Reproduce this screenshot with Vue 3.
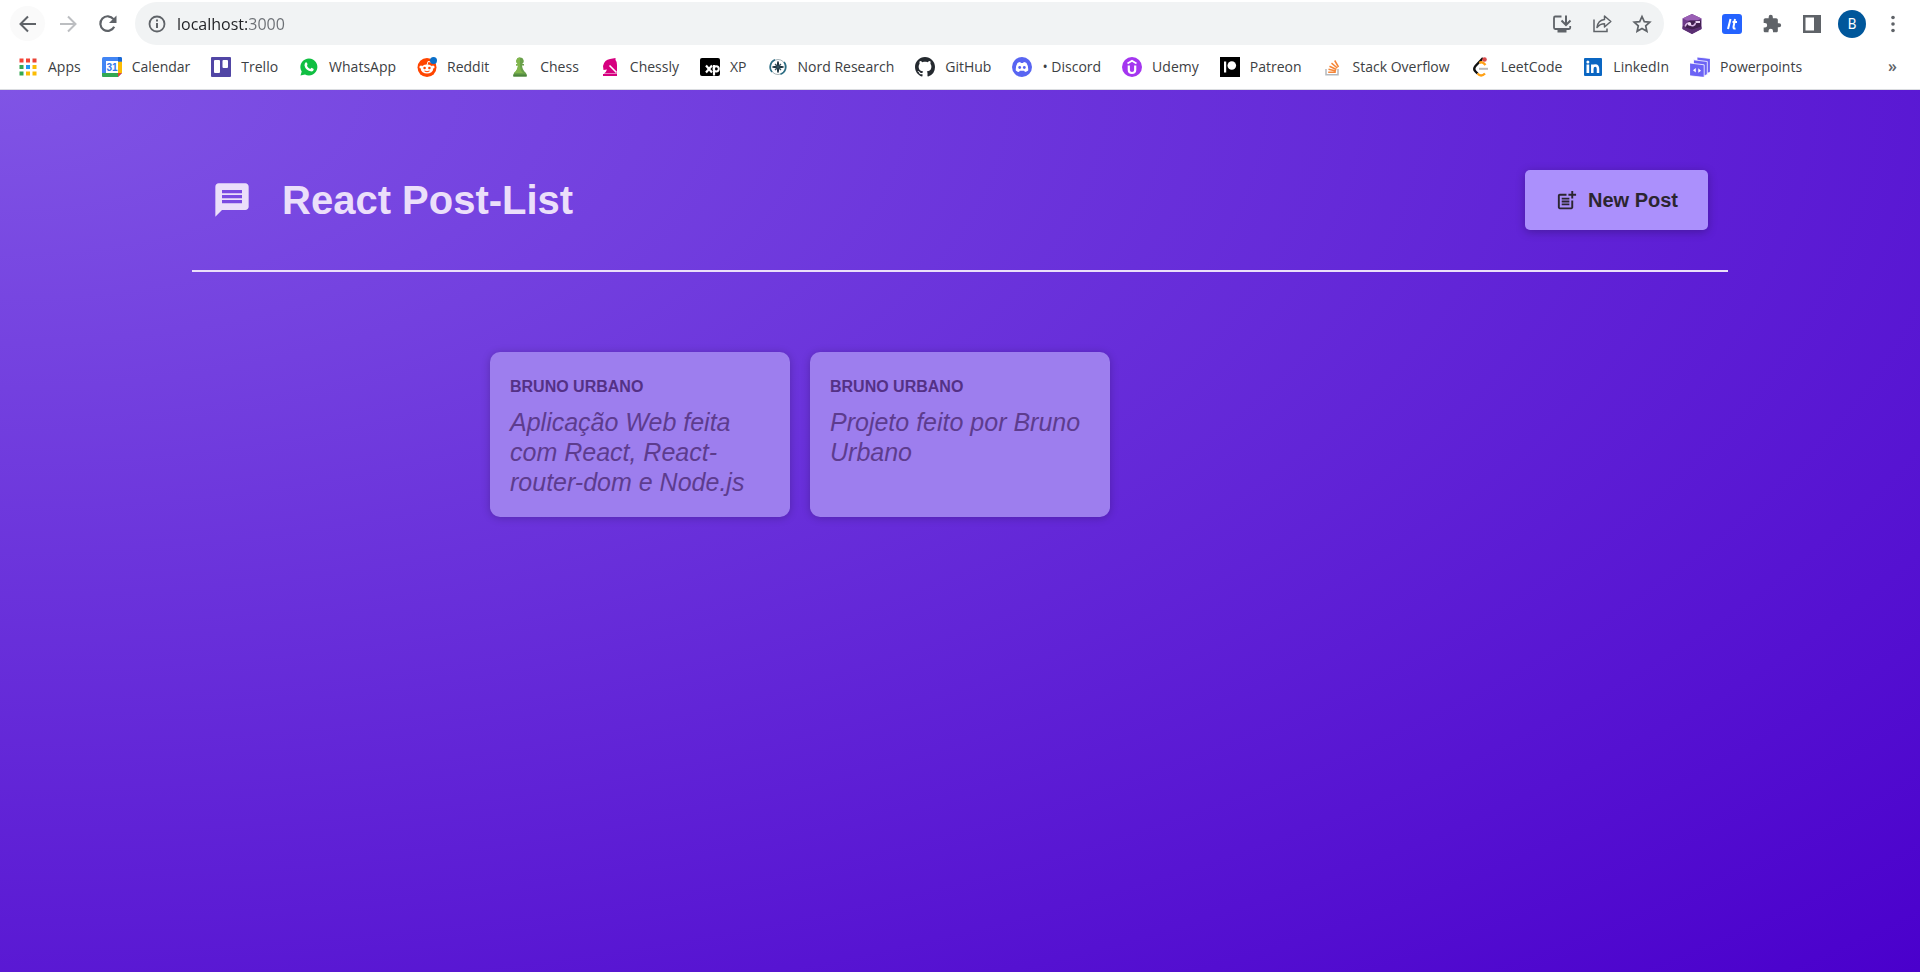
<script setup>
const bookmarks = [
  { id: 'apps', label: 'Apps' },
  { id: 'calendar', label: 'Calendar' },
  { id: 'trello', label: 'Trello' },
  { id: 'whatsapp', label: 'WhatsApp' },
  { id: 'reddit', label: 'Reddit' },
  { id: 'chess', label: 'Chess' },
  { id: 'chessly', label: 'Chessly' },
  { id: 'xp', label: 'XP' },
  { id: 'nord', label: 'Nord Research' },
  { id: 'github', label: 'GitHub' },
  { id: 'discord', label: '• Discord' },
  { id: 'udemy', label: 'Udemy' },
  { id: 'patreon', label: 'Patreon' },
  { id: 'stack', label: 'Stack Overflow' },
  { id: 'leetcode', label: 'LeetCode' },
  { id: 'linkedin', label: 'LinkedIn' },
  { id: 'powerpoints', label: 'Powerpoints' },
]
const appColors = ['#f44336', '#f44336', '#ea4335', '#34a853', '#2196f3', '#fbbc04', '#34a853', '#fbbc04', '#fbbc04']
const posts = [
  { author: 'Bruno Urbano', body: 'Aplicação Web feita com React, React-router-dom e Node.js' },
  { author: 'Bruno Urbano', body: 'Projeto feito por Bruno Urbano' },
]
</script>

<template>
  <div class="window">
    <div class="browser">
      <div class="toolbar">
        <button class="tool back" aria-label="Back">
          <svg viewBox="0 0 20 20"><path d="M18 10H3M10 2.500L2.500 10L10 17.500" fill="none" stroke="#5f6368" stroke-width="2" /></svg>
        </button>
        <button class="tool" aria-label="Forward">
          <svg viewBox="0 0 20 20"><path d="M2 10H17M10 2.500L17.500 10L10 17.500" fill="none" stroke="#bcbec1" stroke-width="2" /></svg>
        </button>
        <button class="tool" aria-label="Reload">
          <svg viewBox="0 0 20 20"><path d="M16.200 12.800A7.300 7.300 0 1 1 15.500 5.200" fill="none" stroke="#5f6368" stroke-width="2.200" /><path d="M18.500 1.500V9H11Z" fill="#5f6368" /></svg>
        </button>
        <div class="omnibox">
          <svg class="info" viewBox="0 0 20 20"><circle cx="10" cy="10" r="7.500" fill="none" stroke="#5f6368" stroke-width="1.800" /><path d="M10 9v5M10 5.500v2" stroke="#5f6368" stroke-width="2" /></svg>
          <input class="url" aria-label="Address" value="localhost:3000" />
          <button class="tool" aria-label="Install">
            <svg viewBox="0 0 20 20"><path d="M9.500 2.500H3.200Q2 2.500 2 4V13.500Q2 15 3.200 15H17Q18.200 15 18.200 13.800V12" fill="none" stroke="#5f6368" stroke-width="1.800" /><path d="M5.500 15.500h9V18.500h-9Z" fill="#5f6368" /><path d="M14 1.500V10M9.500 6.500L14 11L18.500 6.500" fill="none" stroke="#5f6368" stroke-width="2" /></svg>
          </button>
          <button class="tool" aria-label="Share">
            <svg viewBox="0 0 20 20"><path d="M2 5.500V17.500H15V14.500" fill="none" stroke="#5f6368" stroke-width="1.500" /><path d="M5 13.500Q6 6 12.500 5.500V2L18.800 7.500L12.500 13V9.800Q8 9.800 5 13.500Z" fill="none" stroke="#5f6368" stroke-width="1.500" stroke-linejoin="round" /></svg>
          </button>
          <button class="tool" aria-label="Bookmark">
            <svg viewBox="0 0 20 20"><path d="M10 2.500L12.300 7.600L17.800 8.200L13.700 11.900L14.900 17.300L10 14.500L5.100 17.300L6.300 11.900L2.200 8.200L7.700 7.600Z" fill="none" stroke="#5f6368" stroke-width="1.700" /></svg>
          </button>
        </div>
        <div class="extensions">
          <button class="tool" aria-label="Gem extension">
            <svg viewBox="0 0 20 20"><path d="M10 0L19.500 4.500V15L10 20L0.500 15V4.500Z" fill="#6d3a8a" /><path d="M10 0L19.500 4.500L15 6.500H5L0.500 4.500Z" fill="#9a5fb5" /><path d="M8 6.500H19V13L10 16L1 13Q4 8 8 6.500Z" fill="#41204f" /><path d="M0.500 12.500L10 15.500L19.500 12.500V15L10 20L0.500 15Z" fill="#5b2f73" /><path d="M3 12.500Q4.500 8.500 7.500 9Q8.500 12.500 11.500 11.500Q13 11 13.500 9" fill="none" stroke="#d9b5e6" stroke-width="1.600" /><circle cx="7.500" cy="10" r="1.700" fill="#f0e0f5" /><path d="M13.500 8H18" stroke="#e9d3f1" stroke-width="2" /></svg>
          </button>
          <button class="tool" aria-label="Language extension">
            <svg viewBox="0 0 20 20"><rect width="20" height="20" rx="3" fill="#2563ff" /><path d="M8.500 5L6 15M13 5L11.500 13Q11.300 15 13.500 14.500M10.500 8H15" fill="none" stroke="#fff" stroke-width="2" /></svg>
          </button>
          <button class="tool" aria-label="Extensions">
            <svg viewBox="0 0 24 24"><path fill="#5f6368" d="M20.500 11H19V7c0-1.100-.9-2-2-2h-4V3.500a2.500 2.500 0 0 0-5 0V5H4c-1.100 0-2 .9-2 2v3.800h1.500a2.700 2.700 0 0 1 0 5.400H2V20c0 1.100.9 2 2 2h3.800v-1.500a2.700 2.700 0 0 1 5.400 0V22H17c1.100 0 2-.9 2-2v-4h1.500a2.500 2.500 0 0 0 0-5z" /></svg>
          </button>
          <button class="tool" aria-label="Side panel">
            <svg viewBox="0 0 20 20"><path d="M1 1H19V19H1ZM3.500 3.500V16.500H12V3.500Z" fill="#5f6368" fill-rule="evenodd" /></svg>
          </button>
          <button class="avatar" aria-label="Profile B">B</button>
          <button class="tool" aria-label="Menu">
            <svg viewBox="0 0 20 20" fill="#5f6368"><circle cx="10" cy="3.500" r="1.800" /><circle cx="10" cy="10" r="1.800" /><circle cx="10" cy="16.500" r="1.800" /></svg>
          </button>
        </div>
      </div>

      <nav class="bookmarks" aria-label="Bookmarks">
        <a v-for="b in bookmarks" :key="b.id" class="bookmark" href="#">
          <svg viewBox="0 0 20 20" aria-hidden="true">
            <template v-if="b.id === 'apps'">
              <rect v-for="(c, i) in appColors" :key="i" :x="(i % 3) * 6.500 + 1.500" :y="Math.floor(i / 3) * 6.500 + 1.500" width="4" height="4" :fill="c" />
            </template>
            <template v-else-if="b.id === 'calendar'">
              <rect width="20" height="20" rx="1.500" fill="#4285f4" /><path d="M16 4.500H20V16H16Z" fill="#fbbc04" /><path d="M0 16H16V20H1.500Q0 20 0 18.500Z" fill="#34a853" /><path d="M20 16V20H16Z" fill="#fff" /><path d="M16 16H20L16 20Z" fill="#ea4335" /><path d="M16 0H18.500Q20 0 20 1.500V4.500H16Z" fill="#1967d2" /><rect x="4" y="4" width="12" height="12" fill="#fff" />
              <text x="10" y="13.600" text-anchor="middle" font-size="10" font-weight="700" fill="#3277ea" font-family="Liberation Sans, sans-serif">31</text>
            </template>
            <template v-else-if="b.id === 'trello'">
              <rect width="20" height="20" rx="1" fill="#5146a5" /><rect x="3" y="3" width="6" height="13" rx="1" fill="#fff" /><rect x="11.500" y="3" width="5.500" height="8" rx="1" fill="#fff" />
            </template>
            <template v-else-if="b.id === 'whatsapp'">
              <path d="M1.500 18.500L2.700 14.500A8.500 8.500 0 1 1 6 17.500Z" fill="#10bf42" /><path d="M6.500 5.500Q7.800 4.800 8.500 7L8 9Q9 11 11.200 12L12.500 10.800L14.800 12Q14.500 14.500 12.500 14.500Q6.500 13.500 5.500 8.500Q5.500 6.500 6.500 5.500Z" fill="#fff" />
            </template>
            <template v-else-if="b.id === 'reddit'">
              <circle cx="10" cy="10.500" r="9.500" fill="#ff4500" /><ellipse cx="10" cy="12" rx="6.200" ry="4.500" fill="#fff" /><circle cx="4" cy="10" r="1.600" fill="#fff" /><circle cx="16" cy="10" r="1.600" fill="#fff" /><path d="M10 8L11 4.500L14 5" stroke="#fff" stroke-width="1" fill="none" /><circle cx="7.600" cy="11" r="1.300" fill="#ff4500" /><circle cx="12.400" cy="11" r="1.300" fill="#ff4500" /><path d="M7.500 14Q10 15.500 12.500 14" stroke="#ff4500" fill="none" /><circle cx="16.500" cy="3.500" r="3.500" fill="#0a6fc9" />
            </template>
            <template v-else-if="b.id === 'chess'">
              <path d="M10 0.500A3.500 3.500 0 0 1 12 7H14V8.500H12Q12.500 13 16 16Q17 18 16.500 19.500H3.500Q3 18 4 16Q7.500 13 8 8.500H6V7H8A3.500 3.500 0 0 1 10 0.500Z" fill="#69a04a" /><path d="M10 0.500A3.500 3.500 0 0 0 8 7H6V8.500H8Q7.500 13 4 16H13Q10 13 10 8Z" fill="#81b64c" /><path d="M3.300 17.500H16.700V19.500H3.300Z" fill="#4b843d" />
            </template>
            <template v-else-if="b.id === 'chessly'">
              <path d="M3 17H17V19H3ZM4 16.500Q6.500 14.500 7 12.500L3.500 13L3 9Q4.500 2.500 10 2L15.500 1V3Q17 4.500 17 8V16.500Z" fill="#d6007f" /><path d="M9.500 8.500L16.500 15.500" stroke="#fff" stroke-width="1.600" />
            </template>
            <template v-else-if="b.id === 'xp'">
              <rect y="1" width="20" height="18" rx="2" fill="#000" /><path d="M6 8.500L12 15.500M12 8.500L6 15.500" stroke="#fff" stroke-width="2.200" /><path d="M14 8V18.500" stroke="#fff" stroke-width="2.200" /><circle cx="16.200" cy="11.800" r="2.600" fill="none" stroke="#fff" stroke-width="2" />
            </template>
            <template v-else-if="b.id === 'nord'">
              <circle cx="10" cy="10" r="7.500" fill="none" stroke="#a6b3b8" stroke-width="1" /><path d="M7 2.800A7.700 7.700 0 0 0 4 15M16 5A7.700 7.700 0 0 1 12.500 17.300" fill="none" stroke="#2b6d84" stroke-width="1.600" /><path d="M10 4.500L11 9L15.500 10L11 11L10 15.500L9 11L4.500 10L9 9Z" fill="#152c38" stroke="#152c38" /><path d="M7 7L13 13M13 7L7 13" stroke="#35525f" stroke-width="1.200" />
            </template>
            <template v-else-if="b.id === 'github'">
              <path transform="scale(1.25)" fill="#24292f" d="M8 0C3.580 0 0 3.580 0 8c0 3.540 2.290 6.530 5.470 7.590.4.070.55-.17.55-.38 0-.19-.01-.82-.01-1.490-2.010.37-2.530-.49-2.690-.94-.09-.23-.48-.94-.82-1.130-.28-.15-.68-.52-.01-.53.63-.01 1.080.58 1.230.82.72 1.210 1.870.87 2.330.66.070-.52.280-.87.510-1.070-1.780-.2-3.640-.89-3.640-3.950 0-.87.310-1.590.82-2.150-.08-.2-.36-1.020.080-2.120 0 0 .67-.21 2.200.82.640-.18 1.320-.27 2-.27s1.360.09 2 .27c1.530-1.040 2.200-.82 2.200-.82.440 1.100.160 1.920.080 2.120.510.560.820 1.270.820 2.150 0 3.070-1.870 3.750-3.650 3.950.290.250.540.730.540 1.480 0 1.070-.010 1.930-.010 2.200 0 .210.150.460.550.380A8.010 8.010 0 0 0 16 8c0-4.420-3.580-8-8-8z" />
            </template>
            <template v-else-if="b.id === 'discord'">
              <circle cx="10" cy="10" r="10" fill="#5865f2" /><path d="M5.500 6Q7 5.200 8.300 5L8.800 6H11.200L11.700 5Q13 5.200 14.500 6Q16.500 9 16.200 13.500Q14.500 14.800 13 15L12.200 13.700H7.800L7 15Q5.500 14.800 3.800 13.500Q3.500 9 5.500 6Z" fill="#fff" /><circle cx="7.700" cy="10.500" r="1.400" fill="#5865f2" /><circle cx="12.300" cy="10.500" r="1.400" fill="#5865f2" />
            </template>
            <template v-else-if="b.id === 'udemy'">
              <circle cx="10" cy="10" r="10" fill="#a435f0" /><path d="M6.800 8.500V13Q6.800 16 10 16Q13.200 16 13.200 13V8.500" fill="none" stroke="#fff" stroke-width="2.200" /><path d="M5.500 6.500L10 3.800L14.500 6.500" fill="none" stroke="#fff" stroke-width="1.800" />
            </template>
            <template v-else-if="b.id === 'patreon'">
              <rect width="20" height="20" fill="#000" /><path d="M4 4.500H6.200V15.500H4Z" fill="#fff" /><circle cx="11.800" cy="8.500" r="4.300" fill="#fff" />
            </template>
            <template v-else-if="b.id === 'stack'">
              <path d="M3 12V17.800H15V12" fill="none" stroke="#b5b9bd" stroke-width="1.500" /><path d="M5.200 15.200H12.800M5.500 12.300L13 13.900M6.500 9.300L13.400 12.500M8.500 6.200L14.300 11M11.700 3.500L15.500 10" stroke="#f58536" stroke-width="1.500" />
            </template>
            <template v-else-if="b.id === 'leetcode'">
              <path d="M12 1L4.500 9Q2 12 4.500 14.500L6.500 16.500" fill="none" stroke="#111" stroke-width="2.400" /><path d="M6.500 16.500Q10 20.500 14 16.500M8.500 6Q11 4 14.500 8" fill="none" stroke="#ffa116" stroke-width="2.400" /><path d="M8 11.800H17" stroke="#b8b8b8" stroke-width="2" /><circle cx="13.500" cy="2.500" r="2.300" fill="#d94b4b" />
            </template>
            <template v-else-if="b.id === 'linkedin'">
              <rect x="1" y="1" width="18" height="18" rx="1" fill="#0a66c2" /><path d="M3.500 7.500H6.200V16H3.500Z" fill="#fff" /><circle cx="4.900" cy="4.900" r="1.500" fill="#fff" /><path d="M9.300 16V7.500M9.300 12Q9.300 8.500 12.300 8.500Q15 8.500 15 12V16" fill="none" stroke="#fff" stroke-width="2.500" />
            </template>
            <template v-else>
              <g fill="#6c63f5" stroke="#fff" stroke-width="0.800">
                <path d="M7 0L20.400 1.500V15L17 16.500L7 15Z" />
                <path d="M3.500 2.800L17.300 4.500V17.500L14 19L3.500 17Z" />
                <path d="M-0.400 6L14.200 7.800V20.400L-0.400 18.800Z" />
              </g>
              <path d="M5.800 11V15.500L3 13.200ZM8.300 11.300V15.800L11 13.700Z" fill="#fff" />
            </template>
          </svg>
          <span>{{ b.label }}</span>
        </a>
        <button class="more" aria-label="More bookmarks">»</button>
      </nav>
    </div>

    <div class="page">
      <header class="header">
        <h1 class="title">
          <svg viewBox="0 0 24 24" aria-hidden="true"><path fill="currentColor" d="M20 2H4c-1.100 0-1.990.9-1.990 2L2 22l4-4h14c1.100 0 2-.9 2-2V4c0-1.100-.9-2-2-2zm-2 12H6v-2h12v2zm0-3H6V9h12v2zm0-3H6V6h12v2z" /></svg>
          <span>React Post-List</span>
        </h1>
        <button class="new-post">
          <svg viewBox="0 0 24 24" aria-hidden="true"><path fill="currentColor" d="M17 19.220H5V7h7V5H5c-1.100 0-2 .9-2 2v12c0 1.100.9 2 2 2h12c1.100 0 2-.9 2-2v-7h-2v7.220zM19 2h-2v3h-3v2h3v3h2V7h3V5h-3V2zM7 9h8v2H7zM7 12h8v2H7zM7 15h8v2H7z" /></svg>
          <span>New Post</span>
        </button>
      </header>
      <main>
        <ul class="posts">
          <li v-for="(p, i) in posts" :key="i" class="post">
            <p class="author">{{ p.author }}</p>
            <p class="text">{{ p.body }}</p>
          </li>
        </ul>
      </main>
    </div>
  </div>
</template>

<style>
body {
  margin: 0;
}
</style>

<style scoped>
.window {
  display: flex;
  flex-direction: column;
  min-height: 100vh;
  font-family: "Liberation Sans", Arial, sans-serif;
  background: radial-gradient(ellipse at top left, #8054e5, #4a00cc);
}
button {
  border: 0;
  padding: 0;
  background: none;
  font: inherit;
  cursor: pointer;
}
svg {
  display: block;
  flex: none;
}
.browser {
  background: #fff;
  border-bottom: 1px solid #dadce0;
  font-family: "Open Sans", "Noto Sans", sans-serif;
  color: #3c4043;
}
.toolbar {
  display: flex;
  align-items: center;
  gap: 5px;
  height: 47px;
  padding: 0 10px;
}
.tool {
  display: flex;
  align-items: center;
  justify-content: center;
  width: 35px;
  height: 35px;
  border-radius: 50%;
}
.tool svg {
  width: 20px;
  height: 20px;
}
.back {
  background: #fafafa;
}
.omnibox {
  display: flex;
  align-items: center;
  flex: 1;
  gap: 5px;
  height: 43px;
  margin-left: 5px;
  padding: 0 5px 0 12px;
  border-radius: 22px;
  background: #f1f3f4;
}
.info {
  width: 20px;
  height: 20px;
}
.url {
  flex: 1;
  min-width: 0;
  margin-left: 5px;
  padding: 0;
  border: 0;
  outline: 0;
  font: 16px/24px "Open Sans", "Noto Sans", sans-serif;
  color: transparent;
  background: linear-gradient(90deg, #202124 70px, #6b6f74 70px);
  -webkit-background-clip: text;
  background-clip: text;
}
.extensions {
  display: flex;
  align-items: center;
  gap: 5px;
  margin-left: 5px;
}
.avatar {
  width: 28px;
  height: 28px;
  margin: 0 4px;
  border-radius: 50%;
  background: #00579b;
  color: #fff;
  font: 14px/28px Roboto, sans-serif;
}
.bookmarks {
  display: flex;
  align-items: center;
  gap: 21px;
  height: 40px;
  padding: 0 23px 2px 18px;
}
.bookmark {
  display: flex;
  align-items: center;
  gap: 10px;
  color: inherit;
  font-size: 14px;
  line-height: 20px;
  white-space: nowrap;
  text-decoration: none;
}
.bookmark svg {
  width: 20px;
  height: 20px;
}
.more {
  margin-left: auto;
  padding-bottom: 2px;
  font-size: 16px;
  font-weight: 600;
  line-height: 20px;
  color: #5f6368;
}
.page {
  flex: 1;
  padding-top: 40px;
  background: radial-gradient(ellipse at top left, #8054e5, #4a00cc);
}
.header {
  display: flex;
  align-items: center;
  justify-content: space-between;
  width: 80%;
  box-sizing: border-box;
  margin: 0 auto 80px;
  padding: 40px 20px;
  border-bottom: 2px solid #ebdffa;
}
.title {
  display: flex;
  align-items: center;
  gap: 30px;
  margin: 0;
  color: #ebdffa;
  font-size: 40px;
  line-height: 46px;
}
.title svg {
  width: 40px;
  height: 40px;
}
.new-post {
  display: flex;
  align-items: center;
  gap: 10px;
  height: 60px;
  padding: 0 30px;
  border-radius: 5px;
  background: #ab90fc;
  box-shadow: 0 2px 10px rgba(0, 0, 0, 0.26);
  color: #2b2530;
  font-size: 20px;
  font-weight: 700;
}
.new-post svg {
  width: 23px;
  height: 23px;
}
.posts {
  display: grid;
  grid-template-columns: repeat(auto-fill, 300px);
  justify-content: center;
  gap: 20px;
  max-width: 1000px;
  margin: 0 auto;
  padding: 0;
  list-style: none;
}
.post {
  padding: 25px 20px 20px;
  border-radius: 10px;
  background: #9d7eee;
  box-shadow: 0 1px 8px rgba(0, 0, 0, 0.22);
}
.author {
  margin: 0 0 10px;
  color: #543186;
  font-size: 16px;
  font-weight: 700;
  line-height: 20px;
  text-transform: uppercase;
}
.text {
  margin: 0;
  color: #5d3c8e;
  font-size: 25px;
  font-style: italic;
  line-height: 30px;
}
</style>
